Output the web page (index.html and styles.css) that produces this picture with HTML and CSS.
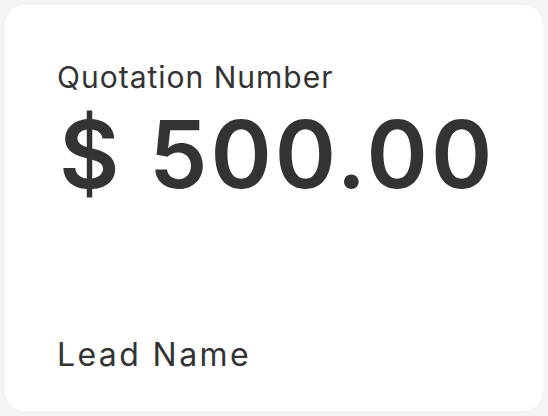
FILE: index.html
```html
<!DOCTYPE html>
<html>
<head>
<meta charset="utf-8">
<link rel="stylesheet" href="styles.css">
</head>
<body>
<div class="card">
  <div class="label label-top">Quotation Number</div>
  <div class="amount">$ 500.00</div>
  <div class="spacer"></div>
  <div class="label label-bottom">Lead Name</div>
</div>
</body>
</html>
```
FILE: styles.css
```css
html, body {
  margin: 0;
  padding: 0;
  background: #f4f4f4;
}
body {
  padding: 5px;
  width: 548px;
  height: 416px;
  box-sizing: border-box;
}
.card {
  background: #ffffff;
  border-radius: 20px;
  height: 406px;
  box-sizing: border-box;
  padding: 54px 52px 38px;
  display: flex;
  flex-direction: column;
  color: #333333;
}
.label {
  font-family: Inter, "Noto Sans", sans-serif;
  font-size: 30px;
  line-height: 36px;
  letter-spacing: 1px;
  white-space: nowrap;
}
.label-bottom {
  font-size: 32px;
  letter-spacing: 2.4px;
}
.amount {
  font-family: Inter, sans-serif;
  font-weight: 600;
  font-size: 93px;
  line-height: 110px;
  letter-spacing: 3px;
  margin-top: 4px;
  padding-left: 2px;
  white-space: nowrap;
}
.spacer {
  flex: 1;
}
```
